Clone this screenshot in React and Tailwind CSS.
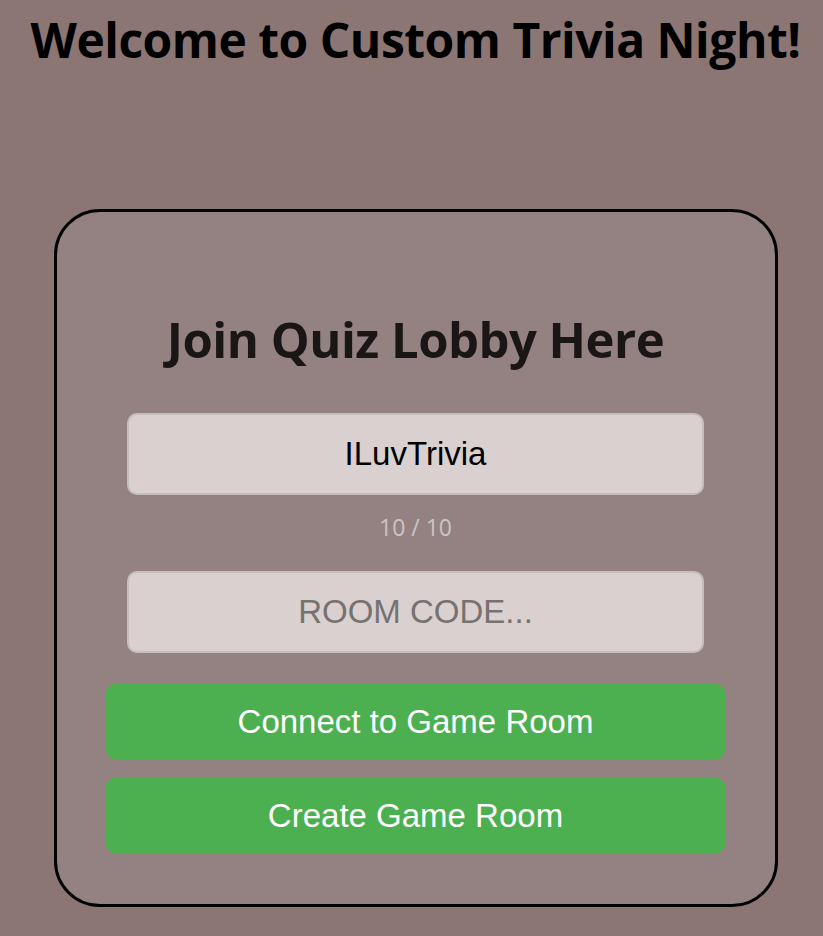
export default function App() {
  return (
    <div className="min-h-screen w-full bg-[#8b7674] pl-2 flex flex-col items-center" style={{ minHeight: 936 }}>
      <h1 className="mt-[8px] h-[64px] flex items-center text-[48px] font-bold text-black leading-none font-['Open_Sans',sans-serif] tracking-[-0.5px]">
        Welcome to Custom Trivia Night!
      </h1>
      <div className="mt-[137px] w-[724px] h-[698px] border-[3px] border-black rounded-[46px] bg-[#938281] flex flex-col items-center">
        <h2 className="mt-[97px] h-[60px] flex items-center text-[49px] font-bold text-[#1a1616] leading-none font-['Open_Sans',sans-serif] tracking-[-0.5px]">
          Join Quiz Lobby Here
        </h2>
        <div className="mt-[44px] w-[577px] h-[82px] rounded-[10px] bg-[#d9d0cf] border-2 border-[#c6bdbd] flex items-center justify-center text-[33px] text-black font-['Liberation_Sans',Arial,sans-serif]">
          ILuvTrivia
        </div>
        <div className="mt-[14px] h-[36px] flex items-center text-[23px] text-[#cac5c7] font-['Open_Sans',sans-serif]">
          10 / 10
        </div>
        <div className="mt-[26px] w-[577px] h-[82px] rounded-[10px] bg-[#d9d0cf] border-2 border-[#c6bdbd] flex items-center justify-center text-[33px] text-[#767272] font-['Liberation_Sans',Arial,sans-serif]">
          ROOM CODE...
        </div>
        <div className="mt-[31px] w-[619px] h-[75px] rounded-[9px] bg-[#4caf50] flex items-center justify-center text-[33px] text-white font-['Liberation_Sans',Arial,sans-serif]">
          Connect to Game Room
        </div>
        <div className="mt-[19px] w-[619px] h-[75px] rounded-[9px] bg-[#4caf50] flex items-center justify-center text-[33px] text-white font-['Liberation_Sans',Arial,sans-serif]">
          Create Game Room
        </div>
      </div>
    </div>
  );
}
